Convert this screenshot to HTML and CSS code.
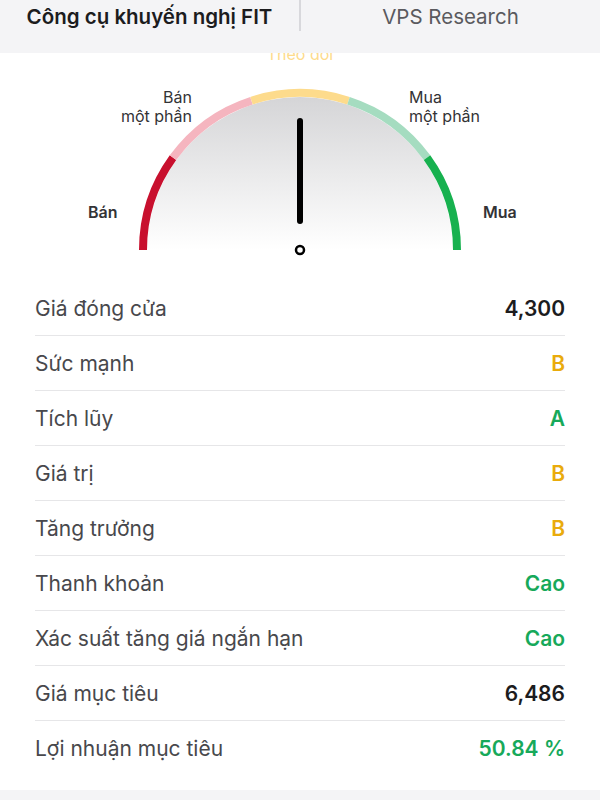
FILE: index.html
```html
<!DOCTYPE html>
<html>
<head>
	<title>Công cụ khuyến nghị FIT</title>
	<meta charset="UTF-8">
	<meta name="viewport" content="width=device-width, initial-scale=1.0">
	<link rel="stylesheet" href="styles.css">
</head>
<body>
	<div class="tabs">
		<div class="tab active">Công cụ khuyến nghị FIT</div>
		<div class="tab">VPS Research</div>
	</div>

	<div class="panel">
		<div class="gauge">
			<svg class="gauge-svg" width="600" height="228" viewBox="0 0 600 228">
				<defs>
					<linearGradient id="dial" x1="0" y1="0" x2="0" y2="1">
						<stop offset="0" stop-color="#d5d5d7"/>
						<stop offset="1" stop-color="#ffffff"/>
					</linearGradient>
				</defs>
				<!-- dial background -->
				<path d="M147 197 A153 153 0 0 1 453 197 Z" fill="url(#dial)"/>
				<!-- five zones -->
				<g fill="none" stroke-width="8">
					<path d="M143 197 A157 157 0 0 1 173 104.7" stroke="#c8102e"/>
					<path d="M173 104.7 A157 157 0 0 1 251.5 47.7" stroke="#f5b5bf"/>
					<path d="M251.5 47.7 A157 157 0 0 1 348.5 47.7" stroke="#fddb8c"/>
					<path d="M348.5 47.7 A157 157 0 0 1 427 104.7" stroke="#a5dcc0"/>
					<path d="M427 104.7 A157 157 0 0 1 457 197" stroke="#17b14f"/>
				</g>
				<!-- needle -->
				<line x1="300" y1="68" x2="300" y2="168" stroke="#000" stroke-width="6" stroke-linecap="round"/>
				<circle cx="300" cy="197" r="4" fill="#fff" stroke="#000" stroke-width="2.5"/>
			</svg>
			<div class="zone zone-hold">Theo dõi</div>
			<div class="zone zone-part-sell">Bán<br>một phần</div>
			<div class="zone zone-part-buy">Mua<br>một phần</div>
			<div class="zone zone-sell">Bán</div>
			<div class="zone zone-buy">Mua</div>
		</div>

		<div class="rows">
			<div class="row"><span class="label">Giá đóng cửa</span><span class="value">4,300</span></div>
			<div class="row"><span class="label">Sức mạnh</span><span class="value amber">B</span></div>
			<div class="row"><span class="label">Tích lũy</span><span class="value green">A</span></div>
			<div class="row"><span class="label">Giá trị</span><span class="value amber">B</span></div>
			<div class="row"><span class="label">Tăng trưởng</span><span class="value amber">B</span></div>
			<div class="row"><span class="label">Thanh khoản</span><span class="value green">Cao</span></div>
			<div class="row"><span class="label">Xác suất tăng giá ngắn hạn</span><span class="value green">Cao</span></div>
			<div class="row"><span class="label">Giá mục tiêu</span><span class="value">6,486</span></div>
			<div class="row"><span class="label">Lợi nhuận mục tiêu</span><span class="value green">50.84 %</span></div>
		</div>
	</div>
</body>
</html>
```

FILE: styles.css
```css
	body {
		margin: 0;
		background-color: #f4f4f6;
		font-family: Inter, "Liberation Sans", Arial, sans-serif;
		color: #1c1c1e;
	}

	.tabs {
		display: flex;
		height: 53px;
		background-color: #f4f4f6;
	}

	.tab {
		flex: 1;
		text-align: center;
		font-size: 20.5px;
		line-height: 20px;
		padding-top: 7px;
		color: #5a5a5e;
	}

	.tab.active {
		font-weight: 600;
		color: #1c1c1e;
		border-right: 2px solid #d8d8dc;
		height: 24px;
	}

	.panel {
		background-color: #ffffff;
		overflow: hidden;
		padding-bottom: 15px;
	}

	/* Gauge */
	.gauge {
		position: relative;
		height: 228px;
	}

	.gauge-svg {
		display: block;
	}

	.zone {
		position: absolute;
		font-size: 16px;
		line-height: 19px;
		color: #333336;
	}

	.zone-hold {
		top: -8px;
		left: 0;
		right: 0;
		text-align: center;
		color: #fddb8c;
	}

	.zone-part-sell {
		top: 35px;
		right: 408px;
		text-align: right;
	}

	.zone-part-buy {
		top: 35px;
		left: 409px;
	}

	.zone-sell {
		top: 150px;
		left: 88px;
		font-weight: 600;
	}

	.zone-buy {
		top: 150px;
		left: 483px;
		font-weight: 600;
	}

	/* Data rows */
	.rows {
		padding: 0 35px;
	}

	.row {
		display: flex;
		justify-content: space-between;
		align-items: center;
		height: 54px;
		border-bottom: 1px solid #e6e6e8;
		font-size: 21px;
	}

	.row:last-child {
		border-bottom: none;
	}

	.label {
		color: #48484c;
	}

	.value {
		font-weight: 600;
		color: #1c1c1e;
	}

	.value.amber {
		color: #e9ab0c;
	}

	.value.green {
		color: #17a95a;
	}
```
